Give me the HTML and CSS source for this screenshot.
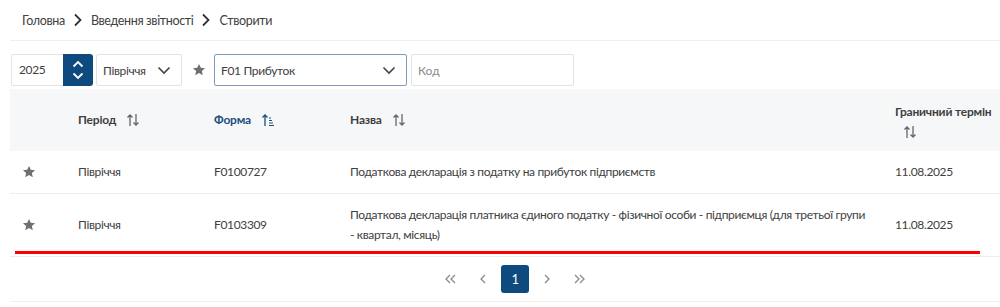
FILE: index.html
```html
<!DOCTYPE html>
<html lang="uk">
<head>
  <meta charset="UTF-8">
  <title>Створити</title>
  <link rel="stylesheet" href="styles.css">
</head>
<body>
<div class="page">
  <div class="crumbs">
    <a href="javascript:void(0);">Головна</a>
    <svg class="crumb-sep" width="10" height="14" viewBox="0 0 10 14"><path d="M2 1.5 L7.5 7 L2 12.5" fill="none" stroke="#333" stroke-width="1.8"/></svg>
    <a href="javascript:void(0);">Введення звітності</a>
    <svg class="crumb-sep" width="10" height="14" viewBox="0 0 10 14"><path d="M2 1.5 L7.5 7 L2 12.5" fill="none" stroke="#333" stroke-width="1.8"/></svg>
    <span>Створити</span>
  </div>

  <div class="filters">
    <div class="year">
      <div class="year-value">2025</div>
      <div class="year-spin">
        <svg width="12" height="8" viewBox="0 0 12 8"><path d="M1.5 6.5 L6 2 L10.5 6.5" fill="none" stroke="#fff" stroke-width="1.8"/></svg>
        <svg width="12" height="8" viewBox="0 0 12 8"><path d="M1.5 1.5 L6 6 L10.5 1.5" fill="none" stroke="#fff" stroke-width="1.8"/></svg>
      </div>
    </div>
    <div class="select period">
      <span>Півріччя</span>
      <svg width="14" height="9" viewBox="0 0 14 9"><path d="M1.5 1.5 L7 7 L12.5 1.5" fill="none" stroke="#444" stroke-width="1.6"/></svg>
    </div>
    <svg class="fav" width="14" height="14" viewBox="0 0 24 24"><path d="M12 1.5 L15.1 8.2 L22.4 8.9 L16.9 13.8 L18.5 21 L12 17.3 L5.5 21 L7.1 13.8 L1.6 8.9 L8.9 8.2 Z" fill="#6f6f6f"/></svg>
    <div class="select form-select">
      <span>F01 Прибуток</span>
      <svg width="14" height="9" viewBox="0 0 14 9"><path d="M1.5 1.5 L7 7 L12.5 1.5" fill="none" stroke="#444" stroke-width="1.6"/></svg>
      <div class="mark mark-form"></div>
    </div>
    <input class="code" type="text" placeholder="Код">
  </div>

  <div class="table">
    <div class="row head">
      <div class="cell"></div>
      <div class="cell">Період <svg class="sort" width="14" height="14" viewBox="0 0 14 14"><path d="M4 13 V2 M1.5 4.5 L4 2 L6.5 4.5 M10 1 V12 M7.5 9.5 L10 12 L12.5 9.5" fill="none" stroke="#666" stroke-width="1.3"/></svg></div>
      <div class="cell active">Форма <svg class="sort" width="14" height="14" viewBox="0 0 14 14"><path d="M4 13 V2 M1.5 4.5 L4 2 L6.5 4.5" fill="none" stroke="#1f4e7d" stroke-width="1.3"/><path d="M8 5 H10 M8 7.5 H11 M8 10 H12 M8 12.5 H13" fill="none" stroke="#1f4e7d" stroke-width="1.2"/></svg></div>
      <div class="cell">Назва <svg class="sort" width="14" height="14" viewBox="0 0 14 14"><path d="M4 13 V2 M1.5 4.5 L4 2 L6.5 4.5 M10 1 V12 M7.5 9.5 L10 12 L12.5 9.5" fill="none" stroke="#666" stroke-width="1.3"/></svg></div>
      <div class="cell wrap">Граничний термін <svg class="sort" width="14" height="14" viewBox="0 0 14 14"><path d="M4 13 V2 M1.5 4.5 L4 2 L6.5 4.5 M10 1 V12 M7.5 9.5 L10 12 L12.5 9.5" fill="none" stroke="#666" stroke-width="1.3"/></svg></div>
    </div>
    <div class="row">
      <div class="cell star"><svg width="14" height="14" viewBox="0 0 24 24"><path d="M12 1.5 L15.1 8.2 L22.4 8.9 L16.9 13.8 L18.5 21 L12 17.3 L5.5 21 L7.1 13.8 L1.6 8.9 L8.9 8.2 Z" fill="#6f6f6f"/></svg></div>
      <div class="cell">Півріччя</div>
      <div class="cell">F0100727</div>
      <div class="cell name">Податкова декларація з податку на прибуток підприємств</div>
      <div class="cell">11.08.2025</div>
    </div>
    <div class="row last">
      <div class="cell star"><svg width="14" height="14" viewBox="0 0 24 24"><path d="M12 1.5 L15.1 8.2 L22.4 8.9 L16.9 13.8 L18.5 21 L12 17.3 L5.5 21 L7.1 13.8 L1.6 8.9 L8.9 8.2 Z" fill="#6f6f6f"/></svg></div>
      <div class="cell">Півріччя</div>
      <div class="cell">F0103309</div>
      <div class="cell name">Податкова декларація платника єдиного податку - фізичної особи - підприємця (для третьої групи - квартал, місяць)</div>
      <div class="cell">11.08.2025</div>
      <div class="mark mark-row"></div>
    </div>
  </div>

  <div class="pager">
    <a href="javascript:void(0);"><svg width="14" height="10" viewBox="0 0 14 10"><path d="M6 1 L2 5 L6 9 M11 1 L7 5 L11 9" fill="none" stroke="#8a8a8a" stroke-width="1.3"/></svg></a>
    <a href="javascript:void(0);"><svg width="8" height="10" viewBox="0 0 8 10"><path d="M6 1 L2 5 L6 9" fill="none" stroke="#8a8a8a" stroke-width="1.3"/></svg></a>
    <a href="javascript:void(0);" class="current">1</a>
    <a href="javascript:void(0);"><svg width="8" height="10" viewBox="0 0 8 10"><path d="M2 1 L6 5 L2 9" fill="none" stroke="#8a8a8a" stroke-width="1.3"/></svg></a>
    <a href="javascript:void(0);"><svg width="14" height="10" viewBox="0 0 14 10"><path d="M3 1 L7 5 L3 9 M8 1 L12 5 L8 9" fill="none" stroke="#8a8a8a" stroke-width="1.3"/></svg></a>
  </div>
</div>
</body>
</html>
```

FILE: styles.css
```css
body {
  margin: 0px;
  background: #ffffff;
  font-family: Lato, "Noto Sans", sans-serif;
  font-size: 12px;
  letter-spacing: -0.35px;
  color: #404040;
}

a {
  text-decoration: none;
  color: #404040;
}

.page {
  margin-left: 10px;
}

.crumbs {
  height: 40px;
  padding-left: 12px;
  display: flex;
  align-items: center;
  gap: 8px;
  border-bottom: 1px solid #efefef;
  font-size: 12.5px;
}

.filters {
  display: flex;
  align-items: center;
  height: 32px;
  margin-top: 13px;
  padding-left: 1px;
}

.year {
  display: flex;
  height: 32px;
}

.year-value {
  width: 44px;
  padding-left: 7px;
  line-height: 30px;
  border: 1px solid #e4e4e4;
  border-right: none;
  border-radius: 2px 0px 0px 2px;
}

.year-spin {
  width: 30px;
  background: #0f4a7e;
  border-radius: 0px 3px 3px 0px;
  display: flex;
  flex-direction: column;
  align-items: center;
  justify-content: center;
  gap: 4px;
}

.select {
  position: relative;
  height: 30px;
  border: 1px solid #e2e2e2;
  border-radius: 2px;
  display: flex;
  align-items: center;
  justify-content: space-between;
  padding: 0px 10px 0px 6px;
}

.period {
  width: 68px;
  margin-left: 3px;
}

.fav {
  margin: 0px 8px 0px 10px;
}

.form-select {
  width: 175px;
  border-color: #7d9cbc;
}

.code {
  width: 163px;
  height: 32px;
  box-sizing: border-box;
  margin-left: 4px;
  border: 1px solid #e2e2e2;
  border-radius: 2px;
  padding-left: 6px;
  font-family: Lato, "Noto Sans", sans-serif;
  font-size: 12px;
}

.code::placeholder {
  color: #8a8a8a;
}

.mark {
  position: absolute;
  background: #ff0000;
  height: 3px;
}

.mark-form {
  left: -1px;
  right: -1px;
  top: 36px;
}

.table {
  margin-top: 3px;
}

.row {
  position: relative;
  display: grid;
  grid-template-columns: 58px 136px 136px 545px 115px;
  border-bottom: 1px solid #eeeeee;
}

.row .cell {
  padding: 11px 10px;
  line-height: 20px;
  display: flex;
  align-items: center;
}

.row .cell.name {
  padding-right: 17px;
}

.row.head {
  height: 62px;
  background: #f6f7f9;
  border-bottom: none;
  font-weight: bold;
  color: #3f3f3f;
  letter-spacing: -0.2px;
}

.row.head .cell {
  padding-top: 0px;
  padding-bottom: 0px;
  gap: 10px;
}

.row.head .cell.wrap {
  flex-direction: column;
  align-items: flex-start;
  justify-content: center;
  gap: 0px;
  padding-right: 0px;
  white-space: nowrap;
}

.row.head .cell.wrap .sort {
  margin: 3px 0px 0px 8px;
}

.row.head .active {
  color: #1f4e7d;
}

.cell.star {
  justify-content: flex-start;
  padding-left: 12px;
  padding-right: 0px;
}

.mark-row {
  left: 5px;
  width: 965px;
  bottom: 2px;
}

.pager {
  height: 44px;
  display: flex;
  align-items: center;
  justify-content: center;
  gap: 4px;
  border-bottom: 1px solid #efefef;
  padding-left: 20px;
}

.pager a {
  width: 28px;
  height: 28px;
  display: flex;
  align-items: center;
  justify-content: center;
  border-radius: 3px;
}

.pager a.current {
  background: #0f4a7e;
  color: #ffffff;
  font-size: 13px;
}
```
